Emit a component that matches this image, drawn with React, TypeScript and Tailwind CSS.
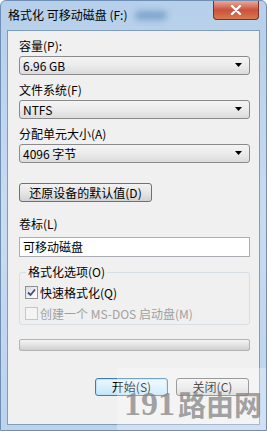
import React from 'react';

const font = "font-['SimSun','Noto_Sans_CJK_SC',sans-serif]";

function Combo({ value }: { value: string }) {
    return (
        <div className="mt-[3px] h-[19px] flex items-center justify-between border border-[#8a8a8a] rounded-[3px] bg-gradient-to-b from-[#f4f4f4] via-[#ebebeb] to-[#dcdcdc] pl-[3px] pr-[6px]">
            <span className="text-[12px] leading-[14px] text-black">{value}</span>
            <svg width="8" height="5" viewBox="0 0 8 5">
                <path d="M0 0 H7 L3.5 4 Z" fill="#000" />
            </svg>
        </div>
    );
}

function Field({ label, value }: { label: string; value: string }) {
    return (
        <div className="flex flex-col">
            <div className="h-[14px] text-[12px] leading-[14px] text-black">{label}</div>
            <Combo value={value} />
        </div>
    );
}

function Checkbox({ checked, disabled, label }: { checked?: boolean; disabled?: boolean; label: string }) {
    return (
        <div className="flex items-center gap-[2px] h-[13px]">
            <div
                className={`w-[13px] h-[13px] border flex items-center justify-center ${
                    disabled
                        ? 'border-[#c6c6c6] bg-[#f4f4f4]'
                        : 'border-[#8e8f8f] bg-gradient-to-br from-[#dcdcdc] to-[#ffffff]'
                }`}
            >
                {checked && (
                    <svg width="9" height="9" viewBox="0 0 9 9">
                        <path d="M1 4.5 L3.5 7 L8 1.5" stroke="#3c4c84" strokeWidth="1.8" fill="none" />
                    </svg>
                )}
            </div>
            <span className={`text-[12px] leading-[14px] ${disabled ? 'text-[#a0a0a0]' : 'text-black'}`}>{label}</span>
        </div>
    );
}

export default function App() {
    return (
        <div className={`relative w-[267px] h-[431px] overflow-hidden bg-gradient-to-b from-[#b6cfea] via-[#c8dbf1] to-[#bcd3ec] border border-[#6f8fb5] rounded-t-[6px] ${font}`}>
            {/* Title bar */}
            <div className="h-[29px] flex items-start justify-between">
                <div className="flex items-center pl-[7px] pt-[7px]">
                    <span className="text-[12px] leading-[14px] text-black font-['Noto_Sans_CJK_SC',sans-serif]">格式化 可移动磁盘 (F:)</span>
                    <span className="ml-[8px] w-[32px] h-[9px] rounded-full bg-[#6d9ac7] blur-[3px] opacity-80"></span>
                </div>
                <div className="mr-[7px] w-[46px] h-[19px] rounded-b-[4px] border border-t-0 border-[#7c2f24] bg-gradient-to-b from-[#e9a99a] via-[#c9513c] to-[#d8794f] flex items-center justify-center">
                    <svg width="12" height="10" viewBox="0 0 12 10">
                        <path d="M2 1 L10 9 M10 1 L2 9" stroke="#fff" strokeWidth="2.4" strokeLinecap="round" />
                    </svg>
                </div>
            </div>

            {/* Client area */}
            <div className="mx-[6px] h-[395px] border border-[#7f9db9] bg-[#f0f0f0] pt-[8px] pl-[11px] pr-[9px] flex flex-col">
                <div className="flex flex-col gap-[8px]">
                    <Field label="容量(P):" value="6.96 GB" />
                    <Field label="文件系统(F)" value="NTFS" />
                    <Field label="分配单元大小(A)" value="4096 字节" />
                </div>

                <button className="mt-[20px] self-start w-[133px] h-[19px] border border-[#707070] rounded-[3px] bg-gradient-to-b from-[#f2f2f2] via-[#e6e6e6] to-[#d2d2d2] text-[12px] leading-[14px] text-black">
                    还原设备的默认值(D)
                </button>

                <div className="mt-[15px] h-[14px] text-[12px] leading-[14px] text-black">卷标(L)</div>
                <div className="mt-[6px] h-[20px] border border-[#abadb3] bg-white flex items-center pl-[3px] text-[12px] leading-[14px] text-black">
                    可移动磁盘
                </div>

                {/* Group box */}
                <div className="relative mt-[15px] h-[53px] border border-[#d5dfe5] rounded-[3px] pt-[13px] pl-[5px] flex flex-col gap-[8px]">
                    <span className="absolute left-[6px] top-[-8px] px-[2px] bg-[#f0f0f0] text-[12px] leading-[14px] text-black">格式化选项(O)</span>
                    <Checkbox checked label="快速格式化(Q)" />
                    <Checkbox disabled label="创建一个 MS-DOS 启动盘(M)" />
                </div>

                {/* Progress bar */}
                <div className="mt-[14px] h-[12px] border border-[#b2b2b2] rounded-[2px] bg-gradient-to-b from-[#f3f3f3] via-[#e3e3e3] to-[#cfcfcf]"></div>

                <div className="mt-[27px] flex justify-end gap-[8px] pr-[1px]">
                    <button className="w-[73px] h-[18px] border border-[#3c7fb1] rounded-[3px] bg-gradient-to-b from-[#eaf6fd] via-[#d9f0fc] to-[#bee6fd] shadow-[inset_0_0_0_1px_#c0e2f8] text-[12px] leading-[14px] text-black">
                        开始(S)
                    </button>
                    <button className="w-[73px] h-[18px] border border-[#707070] rounded-[3px] bg-gradient-to-b from-[#f2f2f2] via-[#e6e6e6] to-[#d2d2d2] text-[12px] leading-[14px] text-black">
                        关闭(C)
                    </button>
                </div>
            </div>

            {/* Watermark */}
            <div className="absolute left-[116px] top-[367px] w-[151px] h-[64px] bg-white/30 flex items-end justify-end pb-[9px] pr-[6px] whitespace-nowrap">
                <span className="text-[34px] leading-[38px] font-bold text-[#7c7c7c]/70 font-['Liberation_Serif',serif]">191</span>
                <span className="ml-[3px] text-[28px] leading-[38px] font-bold text-[#7c7c7c]/70 font-['Noto_Sans_CJK_SC',sans-serif]">路由网</span>
            </div>
        </div>
    );
}
